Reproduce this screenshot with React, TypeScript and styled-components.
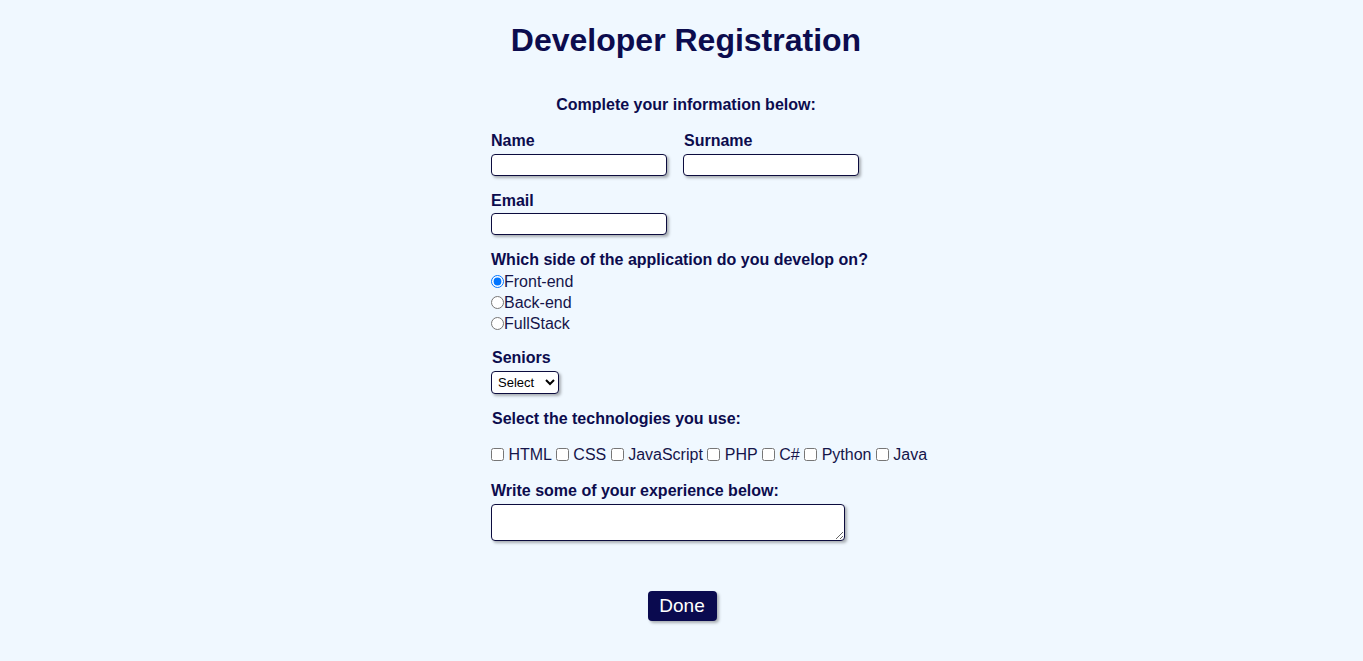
import React from "react";
import styled, { createGlobalStyle } from "styled-components";

const Global = createGlobalStyle`
  html, body { margin: 0; padding: 0; background: #f0f8ff; }
  body { font-family: "Liberation Sans", Arial, sans-serif; color: #0c0c4e; }
`;

const Page = styled.div`
  min-height: 661px;
  padding-left: 9px;
  box-sizing: border-box;
`;

const Title = styled.h1`
  margin: 0;
  padding-top: 22px;
  text-align: center;
  font-size: 32px;
  line-height: 37px;
  font-weight: 700;
  color: #0c0c4e;
`;

const Form = styled.form`
  width: 390px;
  margin: 0 auto;
  display: flex;
  flex-direction: column;
`;

const Subtitle = styled.p`
  margin: 37px 0 18px;
  text-align: center;
  font-size: 16px;
  line-height: 18px;
  font-weight: 700;
`;

const Row = styled.div`
  display: flex;
  gap: 16px;
`;

const Field = styled.div<{ $mt?: number }>`
  display: flex;
  flex-direction: column;
  align-items: flex-start;
  margin-top: ${(p) => p.$mt ?? 0}px;
`;

const Label = styled.label<{ $gap?: number; $indent?: number }>`
  font-size: 16px;
  line-height: 18px;
  font-weight: 700;
  margin-bottom: ${(p) => p.$gap ?? 4}px;
  padding-left: ${(p) => p.$indent ?? 0}px;
`;

const TextInput = styled.input`
  width: 176px;
  height: 22px;
  box-sizing: border-box;
  border: 1px solid #0c0c3e;
  border-radius: 4px;
  background: #fff;
  box-shadow: 2px 2px 3px rgba(0, 0, 0, 0.3);
  padding: 1px 4px;
  margin: 0;
`;

const RadioRow = styled.label`
  display: flex;
  align-items: center;
  height: 21px;
  font-size: 16px;
  color: #15154a;
`;

const Radio = styled.input`
  width: 13px;
  height: 13px;
  margin: 0;
`;

const Select = styled.select`
  width: 68px;
  height: 23px;
  font-family: "Liberation Sans", Arial, sans-serif;
  font-size: 13px;
  border: 1px solid #0c0c3e;
  border-radius: 4px;
  background: #fff;
  color: #000;
  box-shadow: 2px 2px 3px rgba(0, 0, 0, 0.3);
  padding: 0 2px;
  margin: 0;
`;

const Checks = styled.div`
  font-size: 16px;
  line-height: 18px;
  color: #15154a;
  margin-top: 18px;
  white-space: nowrap;
`;

const Check = styled.input`
  width: 13px;
  height: 13px;
  margin: 0;
  vertical-align: -1px;
`;

const TextArea = styled.textarea`
  width: 354px;
  height: 37px;
  box-sizing: border-box;
  border: 1px solid #0c0c3e;
  border-radius: 4px;
  background: #fff;
  box-shadow: 2px 2px 3px rgba(0, 0, 0, 0.3);
  margin: 0;
`;

const Actions = styled.div`
  display: flex;
  justify-content: center;
  padding-right: 8px;
  margin-top: 50px;
`;

const Button = styled.button`
  width: 69px;
  height: 30px;
  border: none;
  border-radius: 4px;
  background: #0a0a4f;
  color: #fff;
  font-family: "Liberation Sans", Arial, sans-serif;
  font-size: 19px;
  box-shadow: 2px 2px 3px rgba(0, 0, 0, 0.3);
  padding: 0;
  cursor: pointer;
`;

const techs = ["HTML", "CSS", "JavaScript", "PHP", "C#", "Python", "Java"];

export default function App() {
  return (
    <Page>
      <Global />
      <Title>Developer Registration</Title>
      <Form onSubmit={(e) => e.preventDefault()}>
        <Subtitle>Complete your information below:</Subtitle>
        <Row>
          <Field>
            <Label>Name</Label>
            <TextInput type="text" />
          </Field>
          <Field>
            <Label $indent={1}>Surname</Label>
            <TextInput type="text" />
          </Field>
        </Row>
        <Field $mt={16}>
          <Label $gap={3}>Email</Label>
          <TextInput type="email" />
        </Field>
        <Field $mt={16}>
          <Label $gap={2}>Which side of the application do you develop on?</Label>
          <RadioRow>
            <Radio type="radio" name="side" defaultChecked />
            Front-end
          </RadioRow>
          <RadioRow>
            <Radio type="radio" name="side" />
            Back-end
          </RadioRow>
          <RadioRow>
            <Radio type="radio" name="side" />
            FullStack
          </RadioRow>
        </Field>
        <Field $mt={15}>
          <Label $indent={1}>Seniors</Label>
          <Select defaultValue="">
            <option value="">Select</option>
            <option>Junior</option>
            <option>Mid</option>
            <option>Senior</option>
          </Select>
        </Field>
        <Field $mt={16}>
          <Label $gap={0} $indent={1}>Select the technologies you use:</Label>
        </Field>
        <Checks>
          {techs.map((t, i) => (
            <React.Fragment key={t}>
              <Check type="checkbox" /> {t}
              {i < techs.length - 1 ? " " : ""}
            </React.Fragment>
          ))}
        </Checks>
        <Field $mt={18}>
          <Label>Write some of your experience below:</Label>
          <TextArea />
        </Field>
        <Actions>
          <Button type="submit">Done</Button>
        </Actions>
      </Form>
    </Page>
  );
}
